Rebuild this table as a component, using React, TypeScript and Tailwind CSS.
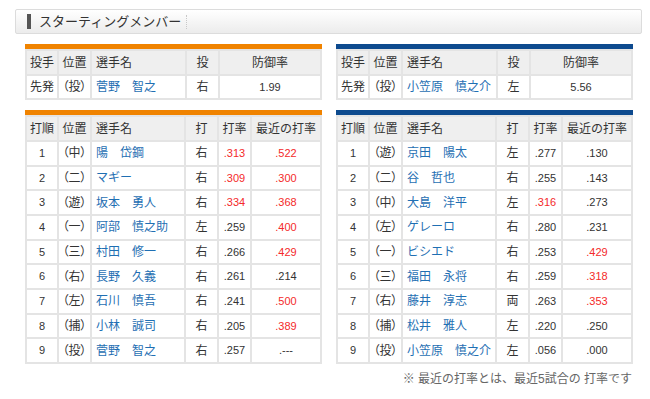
import React from "react";

type Batter = {
  order: string;
  pos: string;
  name: string;
  hand: string;
  avg: string;
  avgHot?: boolean;
  recent: string;
  recentHot?: boolean;
};

const leftBatters: Batter[] = [
  { order: "1", pos: "（中）", name: "陽　岱鋼", hand: "右", avg: ".313", avgHot: true, recent: ".522", recentHot: true },
  { order: "2", pos: "（二）", name: "マギー", hand: "右", avg: ".309", avgHot: true, recent: ".300", recentHot: true },
  { order: "3", pos: "（遊）", name: "坂本　勇人", hand: "右", avg: ".334", avgHot: true, recent: ".368", recentHot: true },
  { order: "4", pos: "（一）", name: "阿部　慎之助", hand: "左", avg: ".259", recent: ".400", recentHot: true },
  { order: "5", pos: "（三）", name: "村田　修一", hand: "右", avg: ".266", recent: ".429", recentHot: true },
  { order: "6", pos: "（右）", name: "長野　久義", hand: "右", avg: ".261", recent: ".214" },
  { order: "7", pos: "（左）", name: "石川　慎吾", hand: "右", avg: ".241", recent: ".500", recentHot: true },
  { order: "8", pos: "（捕）", name: "小林　誠司", hand: "右", avg: ".205", recent: ".389", recentHot: true },
  { order: "9", pos: "（投）", name: "菅野　智之", hand: "右", avg: ".257", recent: ".---" },
];

const rightBatters: Batter[] = [
  { order: "1", pos: "（遊）", name: "京田　陽太", hand: "左", avg: ".277", recent: ".130" },
  { order: "2", pos: "（二）", name: "谷　哲也", hand: "右", avg: ".255", recent: ".143" },
  { order: "3", pos: "（中）", name: "大島　洋平", hand: "左", avg: ".316", avgHot: true, recent: ".273" },
  { order: "4", pos: "（左）", name: "ゲレーロ", hand: "右", avg: ".280", recent: ".231" },
  { order: "5", pos: "（一）", name: "ビシエド", hand: "右", avg: ".253", recent: ".429", recentHot: true },
  { order: "6", pos: "（三）", name: "福田　永将", hand: "右", avg: ".259", recent: ".318", recentHot: true },
  { order: "7", pos: "（右）", name: "藤井　淳志", hand: "両", avg: ".263", recent: ".353", recentHot: true },
  { order: "8", pos: "（捕）", name: "松井　雅人", hand: "左", avg: ".220", recent: ".250" },
  { order: "9", pos: "（投）", name: "小笠原　慎之介", hand: "左", avg: ".056", recent: ".000" },
];

const th = "border-2 border-[#e4e4e4] bg-[#efefef] font-normal text-[#333] h-[25px] p-0";
const td = "border-2 border-[#e4e4e4] bg-white p-0";
const plain = "text-[#333]";
const name = "text-[#1f6fb3] pl-[4px] whitespace-nowrap";
const pos = "text-[#333] text-center [font-feature-settings:'palt']";
const num = (hot?: boolean) => (hot ? "text-[#f42a2a]" : "text-[#333]");

function PitcherTable({ accent, player, hand, era }: { accent: string; player: string; hand: string; era: string }) {
  return (
    <div className="w-[297px]">
      <div className={`h-[5px] ${accent}`} />
      <table className="w-[297px] border-collapse table-fixed text-[12px]">
        <colgroup>
          <col className="w-[32px]" />
          <col className="w-[33px]" />
          <col className="w-[95px]" />
          <col className="w-[33px]" />
          <col />
        </colgroup>
        <thead>
          <tr>
            <th className={`${th} text-center`}>投手</th>
            <th className={`${th} text-center`}>位置</th>
            <th className={`${th} text-left pl-[4px]`}>選手名</th>
            <th className={`${th} text-center`}>投</th>
            <th className={`${th} text-center`}>防御率</th>
          </tr>
        </thead>
        <tbody>
          <tr className="h-[24px]">
            <td className={`${td} ${plain} text-center`}>先発</td>
            <td className={`${td} ${pos}`}>（投）</td>
            <td className={`${td} ${name}`}>{player}</td>
            <td className={`${td} ${plain} text-center`}>{hand}</td>
            <td className={`${td} ${plain} text-center text-[11px]`}>{era}</td>
          </tr>
        </tbody>
      </table>
    </div>
  );
}

function BatterTable({ accent, rows }: { accent: string; rows: Batter[] }) {
  return (
    <div className="w-[297px]">
      <div className={`h-[5px] ${accent}`} />
      <table className="w-[297px] border-collapse table-fixed text-[12px]">
        <colgroup>
          <col className="w-[32px]" />
          <col className="w-[33px]" />
          <col className="w-[94px]" />
          <col className="w-[33px]" />
          <col className="w-[33px]" />
          <col />
        </colgroup>
        <thead>
          <tr>
            <th className={`${th} text-center`}>打順</th>
            <th className={`${th} text-center`}>位置</th>
            <th className={`${th} text-left pl-[4px]`}>選手名</th>
            <th className={`${th} text-center`}>打</th>
            <th className={`${th} text-center`}>打率</th>
            <th className={`${th} text-center`}>最近の打率</th>
          </tr>
        </thead>
        <tbody>
          {rows.map((r) => (
            <tr key={r.order} className="h-[24.67px]">
              <td className={`${td} ${plain} text-center text-[11px]`}>{r.order}</td>
              <td className={`${td} ${pos}`}>{r.pos}</td>
              <td className={`${td} ${name}`}>{r.name}</td>
              <td className={`${td} ${plain} text-center`}>{r.hand}</td>
              <td className={`${td} ${num(r.avgHot)} text-center text-[11px]`}>{r.avg}</td>
              <td className={`${td} ${num(r.recentHot)} text-center text-[11px]`}>{r.recent}</td>
            </tr>
          ))}
        </tbody>
      </table>
    </div>
  );
}

export default function App() {
  return (
    <div
      className="w-[650px] h-[399px] bg-white pt-[9px] pl-[15px] pr-[8px]"
      style={{ fontFamily: '"Liberation Sans", "Noto Sans CJK JP", sans-serif' }}
    >
      {/* Section title */}
      <div className="h-[25px] border border-[#dcdcdc] rounded-[2px] bg-gradient-to-b from-white to-[#ececec] flex items-center pl-[11px]">
        <span className="w-[4px] h-[15px] bg-[#555]" />
        <span className="ml-[8px] text-[13px] text-[#333] leading-none">スターティングメンバー</span>
        <span className="ml-[5px] h-[14px] border-l border-dotted border-[#c8c8c8]" />
      </div>

      <div className="pl-[10px] pr-[9px]">
        {/* Starting pitchers */}
        <div className="mt-[10px] flex justify-between">
          <PitcherTable accent="bg-[#f08300]" player="菅野　智之" hand="右" era="1.99" />
          <PitcherTable accent="bg-[#0d4a8e]" player="小笠原　慎之介" hand="左" era="5.56" />
        </div>

        {/* Batting order */}
        <div className="mt-[10px] flex justify-between">
          <BatterTable accent="bg-[#f08300]" rows={leftBatters} />
          <BatterTable accent="bg-[#0d4a8e]" rows={rightBatters} />
        </div>

        <p className="mt-[6px] text-right text-[12px] text-[#666] pr-[1px]">
          ※ 最近の打率とは、最近5試合の 打率です
        </p>
      </div>
    </div>
  );
}
